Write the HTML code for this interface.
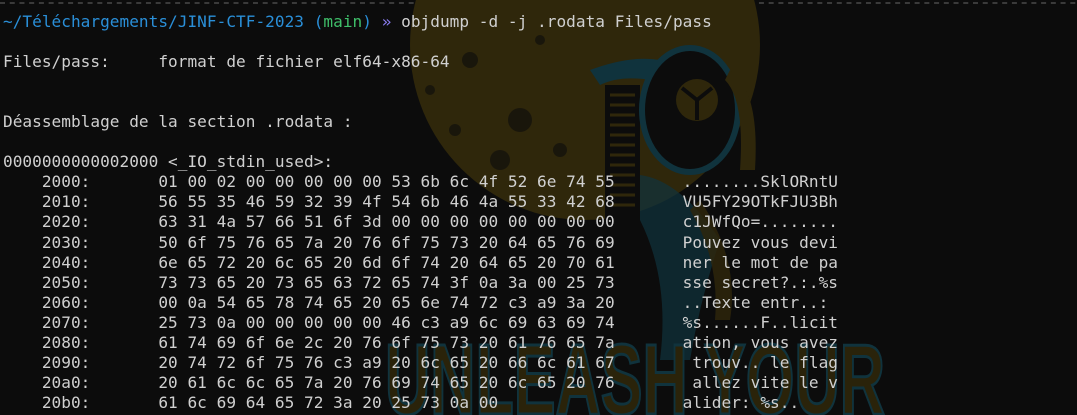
<!DOCTYPE html>
<html><head><meta charset="utf-8"><style>
html,body{margin:0;padding:0;background:#0c0c0c;width:1077px;height:415px;overflow:hidden;position:relative}
#bg{position:absolute;left:0;top:0}
pre{position:absolute;left:3px;top:12px;height:400px;overflow:hidden;margin:0;font-family:"DejaVu Sans Mono","Liberation Mono",monospace;font-size:16.1px;line-height:20.05px;color:#d0d0d0;letter-spacing:0.02px}
.b{color:#2a8fd8}.g{color:#3fbf6a}.p{color:#8a7cf0}
</style></head><body>
<svg id="bg" width="1077" height="415" viewBox="0 0 1077 415">
<line x1="0" y1="3" x2="1077" y2="3" stroke="#4a4a4a" stroke-width="1.5" stroke-dasharray="5 4.73"/>
<circle cx="585" cy="45" r="175" fill="#2f270b"/>
<g fill="#0c0c0c" opacity="0.6">
<circle cx="470" cy="60" r="8"/><circle cx="520" cy="120" r="12"/><circle cx="455" cy="130" r="6"/><circle cx="540" cy="40" r="5"/><circle cx="500" cy="160" r="10"/><circle cx="560" cy="150" r="7"/><circle cx="430" cy="90" r="5"/>
</g>
<rect x="605" y="85" width="35" height="250" fill="#0c0c0c"/>
<g stroke="#2f270b" stroke-width="3">
<line x1="610" y1="95" x2="635" y2="95"/><line x1="610" y1="105" x2="635" y2="105"/><line x1="610" y1="115" x2="635" y2="115"/><line x1="610" y1="125" x2="635" y2="125"/><line x1="610" y1="135" x2="635" y2="135"/><line x1="610" y1="145" x2="635" y2="145"/><line x1="610" y1="155" x2="635" y2="155"/><line x1="610" y1="165" x2="635" y2="165"/><line x1="610" y1="175" x2="635" y2="175"/><line x1="610" y1="185" x2="635" y2="185"/><line x1="610" y1="195" x2="635" y2="195"/><line x1="610" y1="205" x2="635" y2="205"/>
</g>
<path d="M590 70 Q630 55 660 60 L650 80 Q620 75 600 85 Z" fill="#10333d"/>
<ellipse cx="690" cy="110" rx="48" ry="62" fill="#0c0c0c" stroke="#10333d" stroke-width="6"/>
<circle cx="697" cy="100" r="21" fill="#2f270b"/>
<path d="M697 100 L682 88 M697 100 L712 88 M697 100 L697 120" stroke="#0c0c0c" stroke-width="4"/>
<path d="M730 70 Q760 90 755 170 L740 170 Q745 100 725 80 Z" fill="#2f270b"/>
<path d="M640 175 Q680 180 720 240 Q700 300 690 360 L660 360 Q670 280 640 220 Z" fill="#10333d" opacity="0.7"/>
<path d="M700 200 Q740 260 730 320 L715 320 Q720 260 690 210 Z" fill="#2f270b" opacity="0.8"/>
<text x="385" y="414" font-family="Liberation Sans Narrow, Liberation Sans, sans-serif" font-weight="bold" font-size="100" fill="#2a230a" stroke="#10333d" stroke-width="3" textLength="500" lengthAdjust="spacingAndGlyphs">UNLEASH YOUR</text>
</svg>
<pre><span class="b">~/Téléchargements/JINF-CTF-2023 (</span><span class="g">main</span><span class="b">)</span> <span class="p">»</span> objdump -d -j .rodata Files/pass

Files/pass:     format de fichier elf64-x86-64


Déassemblage de la section .rodata :

0000000000002000 &lt;_IO_stdin_used&gt;:
    2000:       01 00 02 00 00 00 00 00 53 6b 6c 4f 52 6e 74 55       ........SklORntU
    2010:       56 55 35 46 59 32 39 4f 54 6b 46 4a 55 33 42 68       VU5FY29OTkFJU3Bh
    2020:       63 31 4a 57 66 51 6f 3d 00 00 00 00 00 00 00 00       c1JWfQo=........
    2030:       50 6f 75 76 65 7a 20 76 6f 75 73 20 64 65 76 69       Pouvez vous devi
    2040:       6e 65 72 20 6c 65 20 6d 6f 74 20 64 65 20 70 61       ner le mot de pa
    2050:       73 73 65 20 73 65 63 72 65 74 3f 0a 3a 00 25 73       sse secret?.:.%s
    2060:       00 0a 54 65 78 74 65 20 65 6e 74 72 c3 a9 3a 20       ..Texte entr..: 
    2070:       25 73 0a 00 00 00 00 00 46 c3 a9 6c 69 63 69 74       %s......F..licit
    2080:       61 74 69 6f 6e 2c 20 76 6f 75 73 20 61 76 65 7a       ation, vous avez
    2090:       20 74 72 6f 75 76 c3 a9 20 6c 65 20 66 6c 61 67        trouv.. le flag
    20a0:       20 61 6c 6c 65 7a 20 76 69 74 65 20 6c 65 20 76        allez vite le v
    20b0:       61 6c 69 64 65 72 3a 20 25 73 0a 00                   alider: %s..</pre>
</body></html>
